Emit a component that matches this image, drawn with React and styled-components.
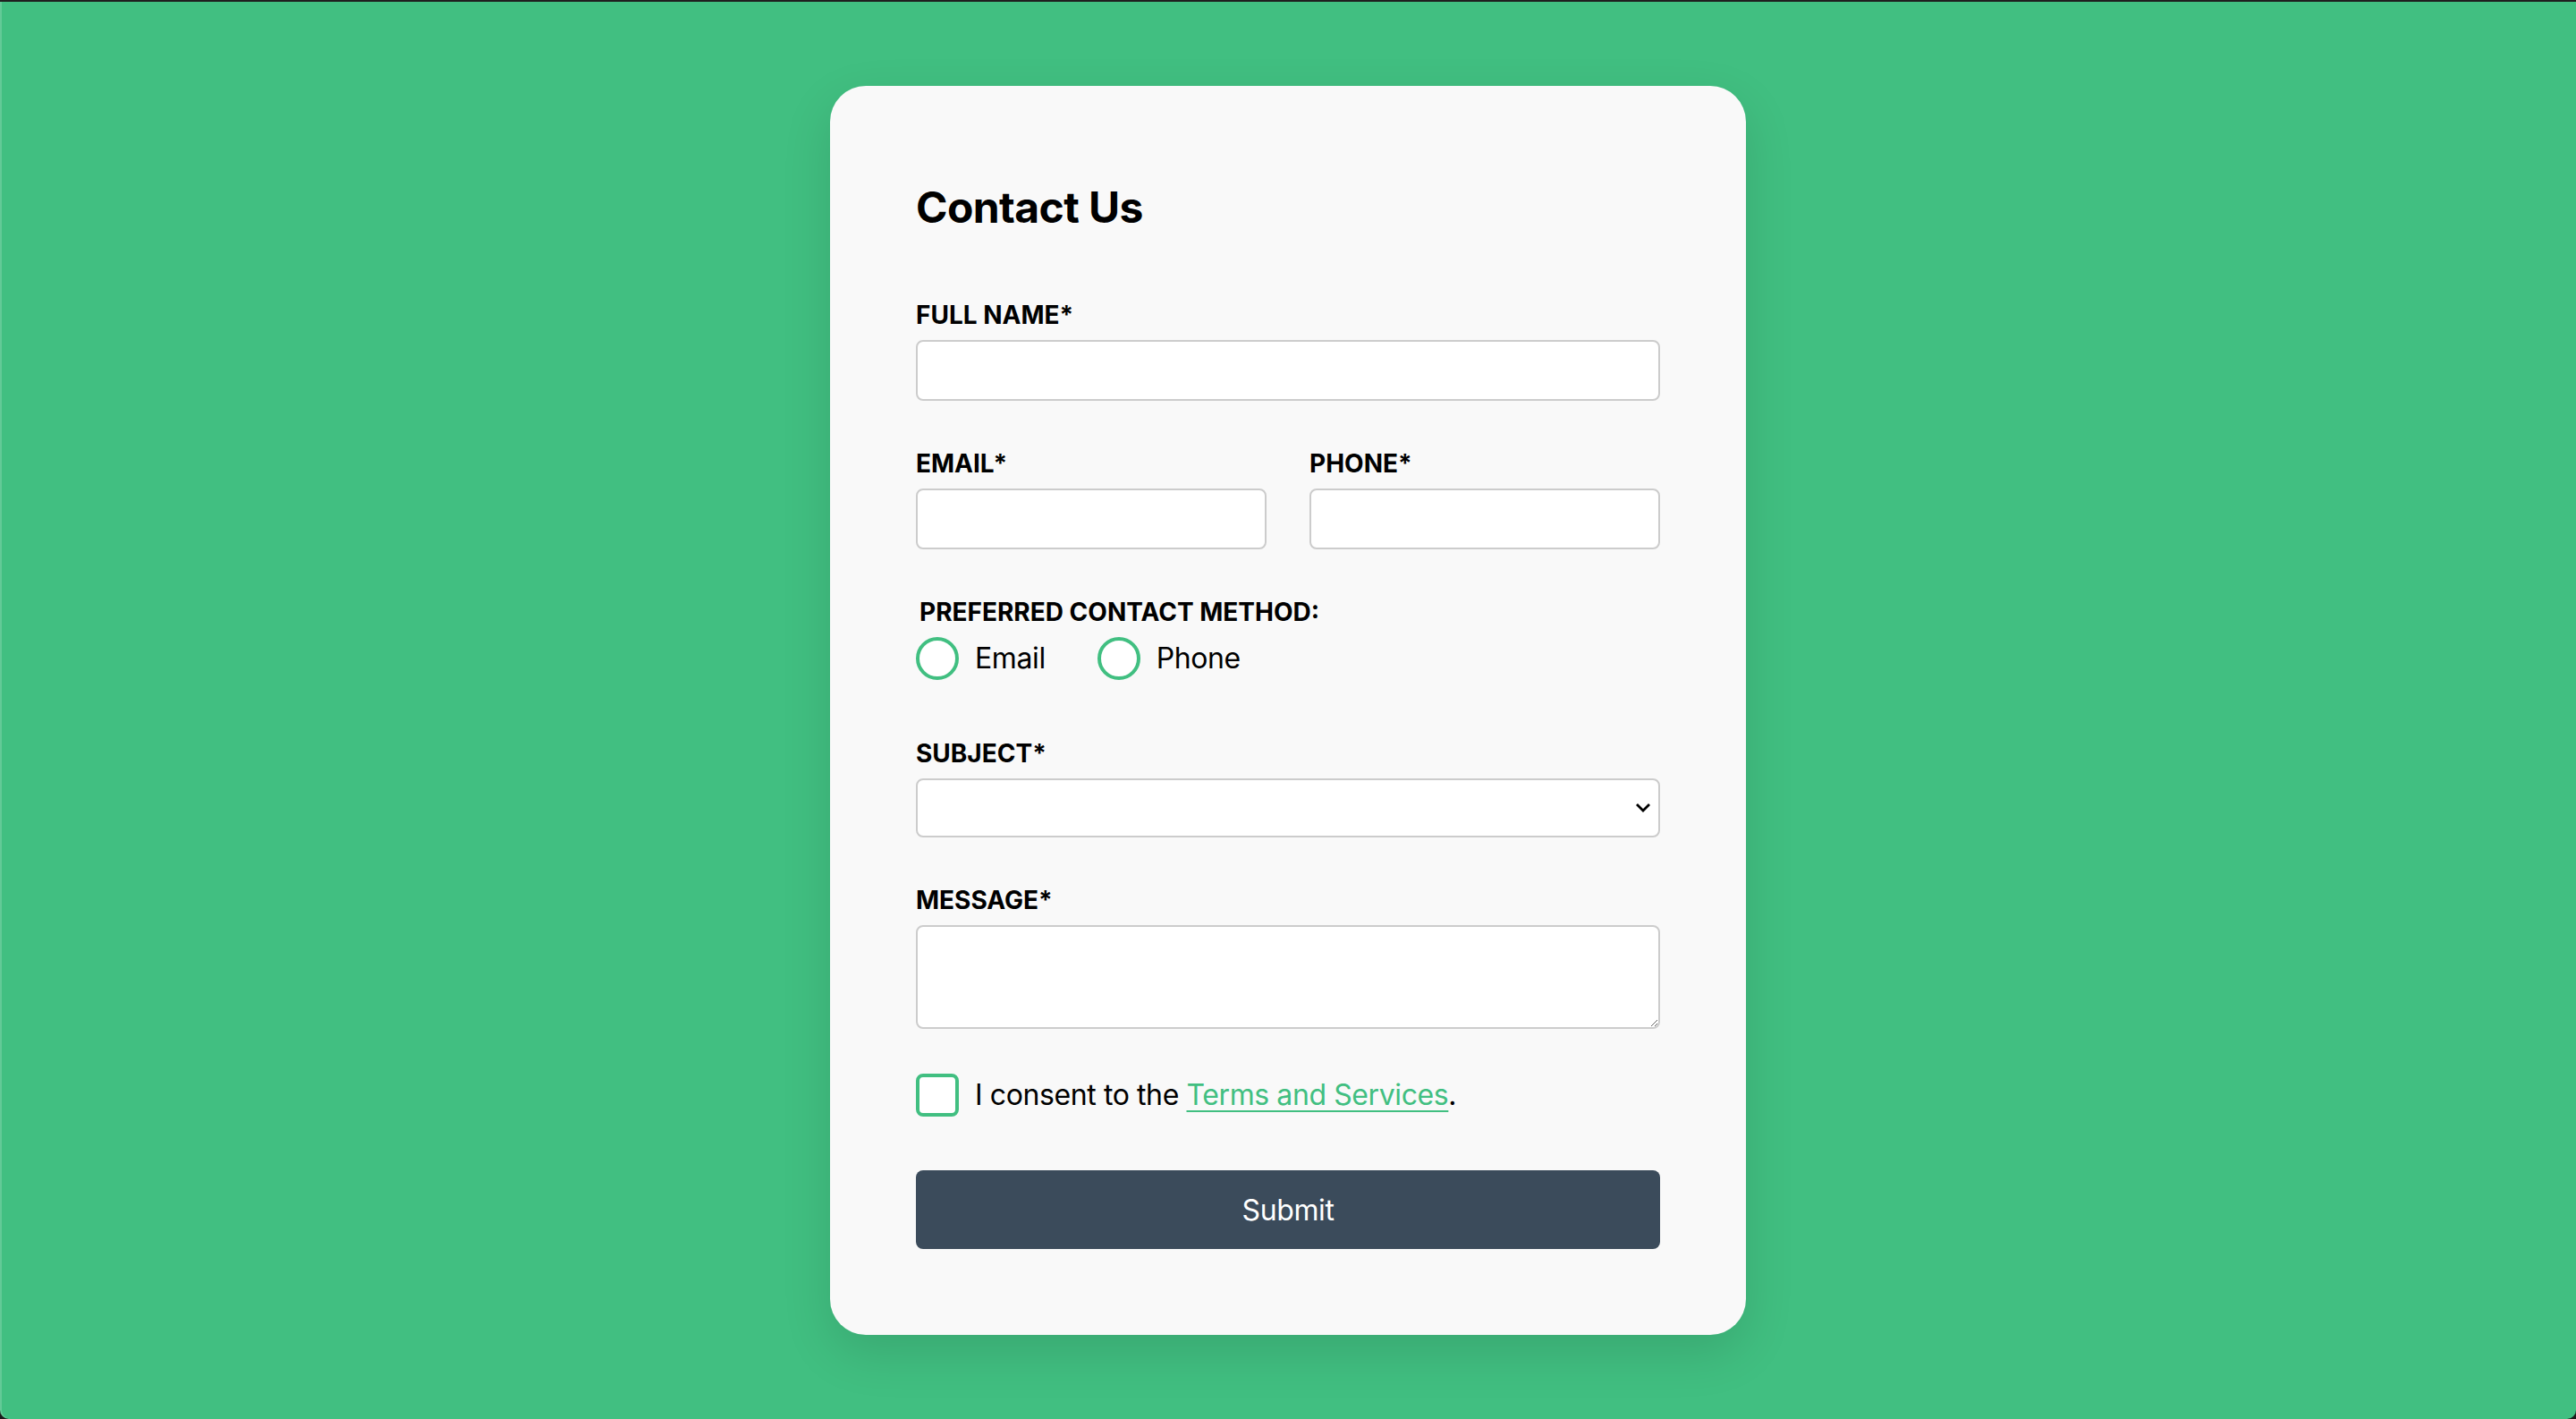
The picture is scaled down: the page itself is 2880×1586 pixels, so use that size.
import React, { useState } from "react";
import styled, { createGlobalStyle } from "styled-components";

const GlobalStyle = createGlobalStyle`
  html, body {
    margin: 0;
    padding: 0;
    background: #1c1c1c;
  }
  * {
    box-sizing: border-box;
  }
  body {
    font-family: "Inter", "Helvetica Neue", Arial, sans-serif;
    color: #000;
  }
`;

const Page = styled.main`
  min-height: 100vh;
  display: flex;
  align-items: center;
  justify-content: center;
  background: #41bf81;
  border-top: 2px solid #1f1f1f;
  border-radius: 0 0 10px 10px;
  box-shadow: inset 2px 0 0 rgba(255, 255, 255, 0.18);
`;

const Card = styled.form`
  width: 1024px;
  padding: 96px;
  background: #f9f9f9;
  border-radius: 40px;
  box-shadow: 0 20px 56px rgba(0, 0, 0, 0.12);
`;

const Title = styled.h2`
  margin: 0 0 60px;
  font-size: 48px;
  line-height: 80px;
  font-weight: 700;
  letter-spacing: -0.6px;
`;

const Field = styled.div`
  display: flex;
  flex-direction: column;
  gap: 8px;
  margin-bottom: ${(p) => (p.$after ?? 50)}px;
`;

const Row = styled.div`
  display: grid;
  grid-template-columns: 1fr 1fr;
  gap: 48px;
  margin-bottom: 50px;
`;

const Label = styled.label`
  font-size: 28px;
  line-height: 40px;
  font-weight: 700;
  text-transform: uppercase;
`;

const controlBase = `
  width: 100%;
  margin: 0;
  border: 2px solid #cccccc;
  border-radius: 8px;
  background: #fff;
  font-family: inherit;
  font-size: 32px;
  padding: 0 20px;
  outline: none;
  &:focus {
    border-color: #41bf81;
  }
`;

const Input = styled.input`
  ${controlBase}
  height: 68px;
`;

const SelectWrap = styled.div`
  position: relative;
`;

const Select = styled.select`
  ${controlBase}
  height: 66px;
  appearance: none;
  -webkit-appearance: none;
  display: block;
`;

const Chevron = styled.svg`
  position: absolute;
  right: 10px;
  top: 27px;
  width: 18px;
  height: 12px;
  pointer-events: none;
`;

const TextArea = styled.textarea`
  ${controlBase}
  height: 116px;
  padding: 16px 20px;
  display: block;
  resize: vertical;
`;

const Fieldset = styled.fieldset`
  border: none;
  margin: 0 0 62px;
  padding: 0;
  min-width: 0;
`;

const Legend = styled.legend`
  padding: 0 4px;
  font-size: 28px;
  line-height: 40px;
  font-weight: 700;
  text-transform: uppercase;
`;

const Options = styled.div`
  display: flex;
  align-items: center;
  gap: 58px;
  margin-top: 8px;
`;

const Option = styled.label`
  display: flex;
  align-items: center;
  gap: 18px;
  font-size: 32px;
  line-height: 48px;
  letter-spacing: -0.4px;
  cursor: pointer;
`;

const Radio = styled.input.attrs({ type: "radio" })`
  appearance: none;
  -webkit-appearance: none;
  width: 48px;
  height: 48px;
  margin: 0;
  border: 4px solid #41bf81;
  border-radius: 50%;
  background: #fff;
  cursor: pointer;
  &:checked {
    background: radial-gradient(circle, #41bf81 0 10px, #fff 12px);
  }
`;

const Consent = styled.label`
  display: flex;
  align-items: center;
  gap: 18px;
  margin-bottom: 60px;
  font-size: 32px;
  line-height: 48px;
  letter-spacing: -0.4px;
`;

const Checkbox = styled.input.attrs({ type: "checkbox" })`
  appearance: none;
  -webkit-appearance: none;
  flex: none;
  width: 48px;
  height: 48px;
  margin: 0;
  border: 4px solid #41bf81;
  border-radius: 8px;
  background: #fff;
  cursor: pointer;
  &:checked {
    background: #41bf81;
  }
`;

const Link = styled.a`
  color: #41bf81;
  text-decoration: underline;
  text-decoration-thickness: 2px;
  text-underline-offset: 6px;
`;

const Submit = styled.button`
  display: block;
  width: 100%;
  height: 88px;
  border: none;
  border-radius: 8px;
  background: #3b4b5b;
  color: #fff;
  font-family: inherit;
  font-size: 32px;
  letter-spacing: -0.4px;
  cursor: pointer;
`;

export default function App() {
  const [method, setMethod] = useState("");

  return (
    <>
      <GlobalStyle />
      <Page>
        <Card onSubmit={(e) => e.preventDefault()}>
          <Title>Contact Us</Title>

          <Field>
            <Label htmlFor="fullName">Full Name*</Label>
            <Input id="fullName" type="text" />
          </Field>

          <Row>
            <Field $after={0}>
              <Label htmlFor="email">Email*</Label>
              <Input id="email" type="email" />
            </Field>
            <Field $after={0}>
              <Label htmlFor="phone">Phone*</Label>
              <Input id="phone" type="tel" />
            </Field>
          </Row>

          <Fieldset>
            <Legend>Preferred contact method:</Legend>
            <Options>
              <Option>
                <Radio
                  name="method"
                  checked={method === "email"}
                  onChange={() => setMethod("email")}
                />
                Email
              </Option>
              <Option>
                <Radio
                  name="method"
                  checked={method === "phone"}
                  onChange={() => setMethod("phone")}
                />
                Phone
              </Option>
            </Options>
          </Fieldset>

          <Field>
            <Label htmlFor="subject">Subject*</Label>
            <SelectWrap>
              <Select id="subject" defaultValue="">
                <option value=""></option>
                <option value="general">General inquiry</option>
                <option value="support">Support</option>
              </Select>
              <Chevron viewBox="0 0 18 12">
                <path
                  d="M2 2l7 7 7-7"
                  fill="none"
                  stroke="#000"
                  strokeWidth="2.8"
                />
              </Chevron>
            </SelectWrap>
          </Field>

          <Field $after={50}>
            <Label htmlFor="message">Message*</Label>
            <TextArea id="message" />
          </Field>

          <Consent>
            <Checkbox />
            <span>
              I consent to the <Link href="#">Terms and Services</Link>.
            </span>
          </Consent>

          <Submit type="submit">Submit</Submit>
        </Card>
      </Page>
    </>
  );
}
